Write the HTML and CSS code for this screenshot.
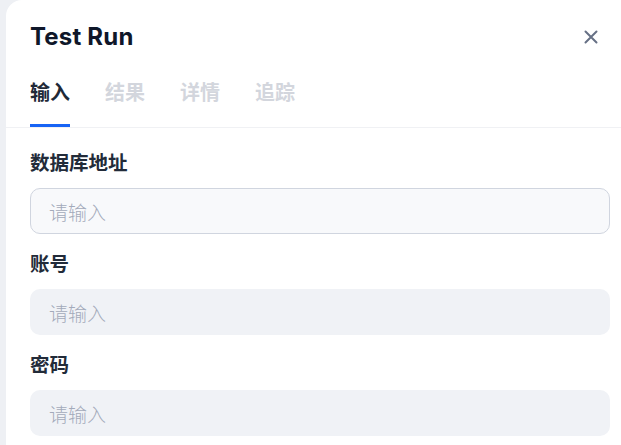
FILE: index.html
```html
<!DOCTYPE html>
<html lang="zh-CN">
<head>
<meta charset="utf-8">
<title>Test Run</title>
<link rel="stylesheet" href="styles.css">
</head>
<body>
<div class="panel">
  <div class="header">
    <h1 class="title">Test Run</h1>
    <button class="close" aria-label="关闭">
      <svg width="14" height="14" viewBox="0 0 14 14"><path d="M1.5 1.5L12.5 12.5M12.5 1.5L1.5 12.5" stroke="currentColor" stroke-width="2" stroke-linecap="round"/></svg>
    </button>
  </div>
  <div class="tabs">
    <div class="tab active">输入</div>
    <div class="tab">结果</div>
    <div class="tab">详情</div>
    <div class="tab">追踪</div>
  </div>
  <div class="body">
    <div class="field">
      <label class="label">数据库地址</label>
      <input class="input bordered" placeholder="请输入">
    </div>
    <div class="field">
      <label class="label">账号</label>
      <input class="input" placeholder="请输入">
    </div>
    <div class="field">
      <label class="label">密码</label>
      <input class="input" placeholder="请输入">
    </div>
  </div>
</div>
</body>
</html>
```
FILE: styles.css
```css
* { box-sizing: border-box; }
html, body { margin: 0; height: 100%; }
body {
  background: #eef0f4;
  font-family: Inter, "Noto Sans CJK SC", sans-serif;
  overflow: hidden;
}
.panel {
  margin-left: 6px;
  height: 100%;
  background: #ffffff;
  border-top-left-radius: 16px;
}
.header {
  display: flex;
  align-items: center;
  justify-content: space-between;
  padding: 21px 11px 0 24px;
  height: 53px;
}
.title {
  margin: 0;
  font-size: 24px;
  line-height: 32px;
  font-weight: 700;
  color: #0f172a;
  letter-spacing: 0.2px;
}
.close {
  border: 0;
  background: none;
  padding: 0;
  margin-right: 12px;
  color: #667085;
  display: flex;
  cursor: pointer;
}
.tabs {
  display: flex;
  gap: 35px;
  padding: 25px 0 0 24px;
  border-bottom: 1px solid #f0f1f4;
}
.tab {
  font-family: "Noto Sans CJK SC", sans-serif;
  font-size: 20px;
  line-height: 28px;
  font-weight: 700;
  color: #d3d6dd;
  padding-bottom: 18px;
  border-bottom: 3px solid transparent;
}
.tab.active {
  color: #1f2937;
  border-bottom-color: #1764f5;
}
.body {
  padding: 20px 11px 0 24px;
}
.field {
  display: flex;
  flex-direction: column;
  margin-bottom: 15px;
}
.label {
  font-family: "Noto Sans CJK SC", sans-serif;
  font-size: 19.5px;
  line-height: 28px;
  font-weight: 700;
  color: #222b39;
  margin-bottom: 12px;
}
.input {
  height: 46px;
  border: 0;
  border-radius: 10px;
  background: #f0f2f6;
  padding: 0 19px;
  font-family: "Noto Sans CJK SC", sans-serif;
  font-size: 19px;
  font-weight: 300;
  color: #1f2937;
  outline: none;
}
.input.bordered {
  background: #f8f9fb;
  border: 1px solid #d0d5df;
  padding: 0 18px;
}
.input::placeholder {
  color: #a3aaba;
}
```
